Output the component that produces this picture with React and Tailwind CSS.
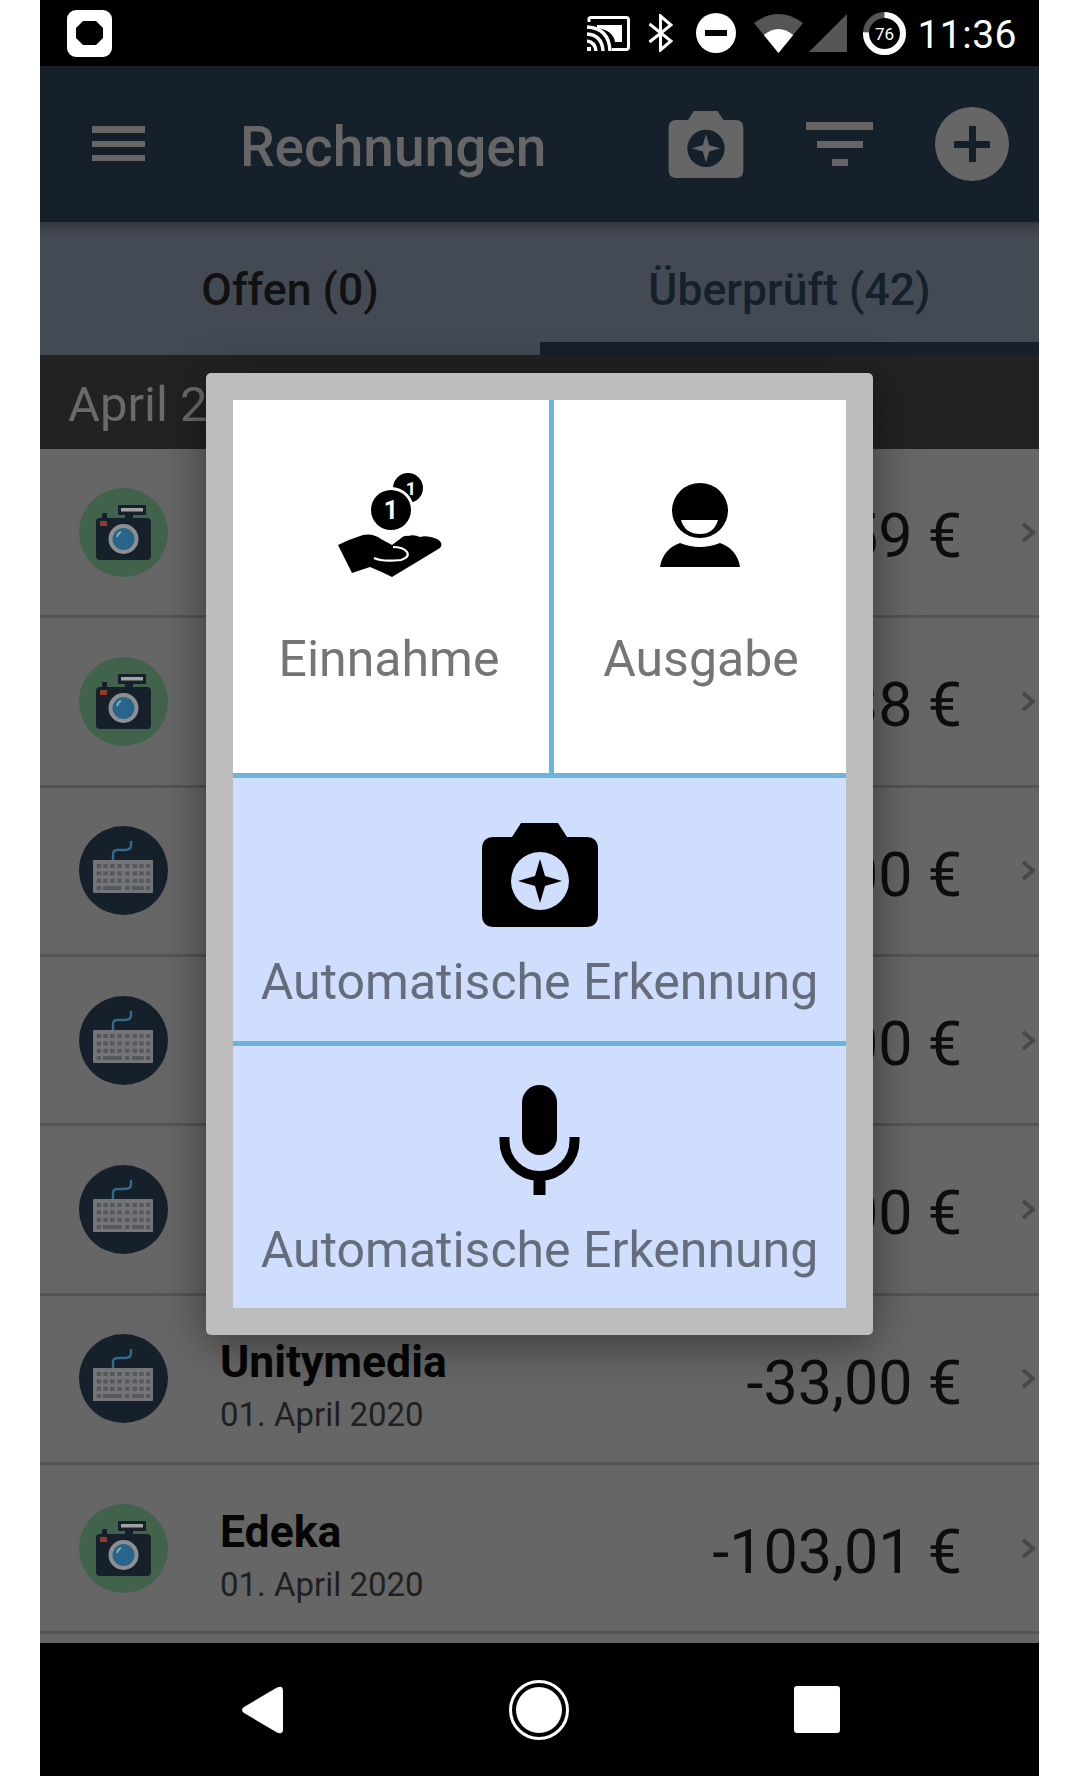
const rows = [
  { icon: 'camera', amount: '-6,59 €' },
  { icon: 'camera', amount: '-3,38 €' },
  { icon: 'keyboard', amount: '-8,00 €' },
  { icon: 'keyboard', amount: '-5,00 €' },
  { icon: 'keyboard', amount: '-9,00 €' },
  { icon: 'keyboard', name: 'Unitymedia', date: '01. April 2020', amount: '-33,00 €' },
  { icon: 'camera', name: 'Edeka', date: '01. April 2020', amount: '-103,01 €' },
]

function CameraStar({ className }) {
  return (
    <svg viewBox="0 0 116 104" className={className}>
      <path
        fillRule="evenodd"
        fill="currentColor"
        d="M30 14 L39 0 H76 L85 14 H104 Q116 14 116 26 V92 Q116 104 104 104 H12 Q0 104 0 92 V26 Q0 14 12 14 Z
           M58 29 A29 29 0 1 0 58 87 A29 29 0 1 0 58 29 Z
           M58 36 L63 53 L80 58 L63 63 L58 80 L53 63 L36 58 L53 53 Z"
      />
    </svg>
  )
}

function CameraAvatar() {
  return (
    <svg viewBox="0 0 89 89" className="w-[89px] h-[89px] shrink-0">
      <circle cx="44.5" cy="44.5" r="44.5" fill="#41634c" />
      <rect x="39" y="17" width="28" height="10" rx="1" fill="#15202b" />
      <rect x="42" y="20" width="22" height="3.5" fill="#a3a3a3" />
      <rect x="46" y="26" width="8" height="5" fill="#15202b" />
      <rect x="23" y="25" width="5" height="6" rx="1" fill="#15202b" />
      <rect x="17" y="30" width="55" height="42" rx="4" fill="#15202b" />
      <rect x="21" y="33" width="7" height="5" fill="#8f3a2b" />
      <circle cx="44.5" cy="51" r="15" fill="#8f8f8f" />
      <circle cx="44.5" cy="51" r="11" fill="#27668a" />
      <path d="M38 49 Q39 45 42 44" stroke="#9fb4bf" strokeWidth="1.5" fill="none" />
    </svg>
  )
}

function KeyboardAvatar() {
  const ys = [38, 45.4, 52.8, 60]
  const xs = [17.7, 24.3, 31, 38.3, 46, 53.7, 60.3, 67]
  return (
    <svg viewBox="0 0 89 89" className="w-[89px] h-[89px] shrink-0">
      <circle cx="44.5" cy="44.5" r="44.5" fill="#15202b" />
      <path d="M34 34 V28 Q34 24 39 24 H46 Q52 24 52 19 V15" stroke="#2f6b8a" strokeWidth="2.4" fill="none" />
      <rect x="14" y="34" width="60" height="33" rx="1" fill="#737578" />
      {ys.map(y => xs.map(x => <rect key={`${x}-${y}`} x={x} y={y} width="4.4" height="4" fill="#55595e" />))}
      <rect x="24" y="60" width="18" height="4" fill="#55595e" />
      <rect x="53" y="60" width="11" height="4" fill="#55595e" />
    </svg>
  )
}

function Row({ icon, name, date, amount }) {
  return (
    <div className="h-[169.33px] shrink-0 border-b-[3px] border-[#545454] flex items-center pl-[39px] pr-[3px]">
      {icon === 'camera' ? <CameraAvatar /> : <KeyboardAvatar />}
      <div className="ml-[52px] mt-[15px]">
        {name && <div className="text-[44.5px] leading-[52px] font-bold text-[#050505]">{name}</div>}
        {date && <div className="text-[33px] leading-[42px] mt-[6px] text-[#1f1f1f]">{date}</div>}
      </div>
      <div className="ml-auto mt-[8px] text-[61px] leading-[70px] text-[#0d0d0d]">{amount}</div>
      <svg viewBox="0 0 15 21" className="w-[15px] h-[21px] ml-[59px]">
        <path d="M2 2 L12 10.5 L2 19" stroke="#484848" strokeWidth="4" fill="none" />
      </svg>
    </div>
  )
}

function StatusBar() {
  return (
    <div className="h-[66px] bg-black flex items-center pl-[27px] pr-[22px] shrink-0">
      <div className="w-[45px] h-[47px] bg-white rounded-[9px] flex items-center justify-center">
        <svg viewBox="0 0 27 24" className="w-[27px] h-[24px]">
          <path d="M7 0 H20 L27 7 V17 L20 24 H7 L0 17 V7 Z" fill="#000" />
        </svg>
      </div>
      <div className="ml-auto flex items-center">
        <svg viewBox="0 0 43 35" className="w-[43px] h-[35px]">
          <path d="M2 6 V3 Q2 1.5 4 1.5 H39 Q41.5 1.5 41.5 4 V31 Q41.5 33.5 39 33.5 H25" stroke="#fff" strokeWidth="3" fill="none" />
          <path d="M0 11 Q22 12 23 35 M0 18 Q15 19 16 35 M0 25 Q8 26 9 35" stroke="#fff" strokeWidth="3.4" fill="none" />
          <path d="M0 31 H4 V35 H0 Z" fill="#fff" />
          <path d="M10 9 H35 V26 H28 Q26 14 10 12 Z" fill="#fff" />
        </svg>
        <svg viewBox="0 0 25 38" className="w-[25px] h-[38px] ml-[18px]">
          <path d="M1.5 10 L23 27 L12.5 36 V2 L23 11 L1.5 28" stroke="#fff" strokeWidth="3" fill="none" />
        </svg>
        <div className="w-[40px] h-[40px] rounded-full bg-white ml-[23px] flex items-center justify-center">
          <div className="w-[22px] h-[6px] bg-black" />
        </div>
        <svg viewBox="0 0 49 39" className="w-[49px] h-[39px] ml-[18px]">
          <path d="M24.5 39 L0 9 Q24.5 -9 49 9 Z" fill="#555" />
          <path d="M24.5 39 L9.8 21 Q24.5 9 39.2 21 Z" fill="#fff" />
        </svg>
        <svg viewBox="0 0 38 38" className="w-[38px] h-[38px] ml-[6px]">
          <path d="M38 0 V38 H0 Z" fill="#555" />
        </svg>
        <svg viewBox="0 0 43 43" className="w-[43px] h-[43px] ml-[16px]">
          <circle cx="21.5" cy="21.5" r="18.5" stroke="#555" strokeWidth="6" fill="none" />
          <circle
            cx="21.5"
            cy="21.5"
            r="18.5"
            stroke="#fff"
            strokeWidth="6"
            fill="none"
            pathLength="100"
            strokeDasharray="76 100"
            transform="rotate(-90 21.5 21.5)"
          />
          <text x="21.5" y="27.5" textAnchor="middle" fill="#fff" fontSize="17" fontFamily="Roboto">76</text>
        </svg>
        <div className="ml-[11px] mt-[4px] text-white text-[39px] leading-[44px] tracking-[0.5px]">11:36</div>
      </div>
    </div>
  )
}

function Header() {
  return (
    <div className="h-[156px] bg-[#15202b] flex items-center pl-[52px] pr-[30px] shrink-0 text-[#666666]">
      <div className="w-[53px] mt-[-2px] flex flex-col gap-[8px]">
        <div className="h-[7px] bg-[#666666]" />
        <div className="h-[6px] bg-[#666666]" />
        <div className="h-[6px] bg-[#666666]" />
      </div>
      <div className="ml-[95px] mt-[5px] text-[55px] leading-[60px] font-medium">Rechnungen</div>
      <CameraStar className="ml-auto w-[76px] h-[67px]" />
      <div className="ml-[62px] w-[67px] flex flex-col items-center gap-[11px]">
        <div className="w-[67px] h-[8px] bg-[#666666]" />
        <div className="w-[46px] h-[7px] bg-[#666666]" />
        <div className="w-[16px] h-[7px] bg-[#666666]" />
      </div>
      <div className="ml-[62px] w-[74px] h-[74px] rounded-full bg-[#666666] flex items-center justify-center relative">
        <div className="w-[36px] h-[7px] bg-[#15202b]" />
        <div className="w-[7px] h-[36px] bg-[#15202b] absolute" />
      </div>
    </div>
  )
}

function Tabs() {
  return (
    <div className="h-[133px] bg-[#434a54] flex shrink-0 relative text-[44.5px] font-medium">
      <div className="absolute inset-x-0 top-0 h-[14px] bg-gradient-to-b from-[#33383f] to-transparent" />
      <div className="w-[500px] flex items-center justify-center pt-[3px] text-[#111111]">Offen (0)</div>
      <div className="flex-1 flex items-center justify-center pt-[16px] border-b-[13px] border-[#15202b] text-[#15202b]">
        Überprüft (42)
      </div>
    </div>
  )
}

function HandIcon() {
  return (
    <svg viewBox="0 0 104 107" className="w-[104px] h-[107px] ml-[-2px]">
      <circle cx="70" cy="18" r="15" fill="#000" />
      <text x="73" y="25" textAnchor="middle" fill="#fff" fontSize="18" fontWeight="700" fontFamily="Roboto">1</text>
      <circle cx="53" cy="40" r="23" fill="#fff" />
      <circle cx="53" cy="40" r="20" fill="#000" />
      <text x="53" y="49" textAnchor="middle" fill="#fff" fontSize="25" fontWeight="700" fontFamily="Roboto">1</text>
      <path
        d="M0 75 Q12 69 25 65 Q35 63 43 69 L54 75 L62 69 Q66 65 70 66 Q76 64 82 67 Q90 65 99 69 Q106 73 102 78 L54 107 Q42 101 32 97 L14 103 Z"
        fill="#000"
      />
      <path d="M36 88 Q44 92 63 90 Q72 87 69 82 Q65 77 55 77" stroke="#fff" strokeWidth="2.2" fill="none" />
    </svg>
  )
}

function PersonIcon() {
  return (
    <svg viewBox="0 0 80 84" className="w-[80px] h-[84px]">
      <ellipse cx="40" cy="27.5" rx="28" ry="27.5" fill="#000" />
      <path d="M21 37 H58 Q54 51 40 51 Q25 51 21 37 Z" fill="#fff" />
      <path d="M0 84 Q3 66 20 60 Q40 68 60 60 Q77 66 80 84 Z" fill="#000" />
    </svg>
  )
}

function MicIcon() {
  return (
    <svg viewBox="0 0 81 110" className="w-[81px] h-[110px]">
      <rect x="23" y="0" width="35" height="70" rx="17.5" fill="#000" />
      <path d="M5.5 52 V56 A35 35 0 0 0 75.5 56 V52" stroke="#000" strokeWidth="10" fill="none" />
      <rect x="34.5" y="88" width="12" height="22" fill="#000" />
    </svg>
  )
}

function Modal() {
  return (
    <div className="absolute left-[166px] top-[373px] w-[667px] h-[962px] p-[27px] bg-[#bdbdbd] rounded-[5px] shadow-[0_8px_45px_rgba(0,0,0,0.45)]">
      <div className="h-full flex flex-col text-[50px] leading-[56px]">
        <div className="h-[373px] bg-white flex shrink-0 text-[#757575]">
          <div className="w-[316px] flex flex-col items-center pt-[70px]">
            <HandIcon />
            <div className="mt-[54px] ml-[-4px]">Einnahme</div>
          </div>
          <div className="w-[5px] bg-[#6cb4e0]" />
          <div className="flex-1 flex flex-col items-center pt-[83px]">
            <PersonIcon />
            <div className="mt-[64px] ml-[2px]">Ausgabe</div>
          </div>
        </div>
        <div className="h-[5px] bg-[#6cb4e0] shrink-0" />
        <div className="h-[263px] bg-[#cfdefd] flex flex-col items-center pt-[45px] shrink-0 text-[#656d7d]">
          <CameraStar className="w-[116px] h-[104px] text-black" />
          <div className="mt-[27px]">Automatische Erkennung</div>
        </div>
        <div className="h-[5px] bg-[#6cb4e0] shrink-0" />
        <div className="flex-1 bg-[#cfdefd] flex flex-col items-center pt-[39px] text-[#656d7d]">
          <MicIcon />
          <div className="mt-[27px]">Automatische Erkennung</div>
        </div>
      </div>
    </div>
  )
}

function NavBar() {
  return (
    <div className="h-[133px] bg-black flex items-center pl-[201px] shrink-0 relative">
      <svg viewBox="0 0 42 48" className="w-[42px] h-[48px]">
        <path d="M3 21 L36 1.5 Q42 -1 42 5 V43 Q42 49 36 46.5 L3 27 Q-1 24 3 21 Z" fill="#fff" />
      </svg>
      <div className="ml-[226px] w-[60px] h-[60px] rounded-full border-[3px] border-white p-[4px]">
        <div className="w-full h-full rounded-full bg-white" />
      </div>
      <div className="ml-[225px] w-[46px] h-[47px] bg-white rounded-[3px]" />
    </div>
  )
}

export default function App() {
  return (
    <div className="w-[1080px] h-[1776px] bg-white font-['Roboto',sans-serif] pl-[40px]">
      <div className="w-[999px] h-full relative overflow-hidden flex flex-col bg-[#666666]">
        <StatusBar />
        <Header />
        <Tabs />
        <div className="h-[94px] bg-[#222222] flex items-center pl-[28px] pt-[6px] text-[49px] text-[#6a6a6a] shrink-0">April 2020</div>
        <div className="flex-1 overflow-hidden">
          {rows.map((r, i) => <Row key={i} {...r} />)}
        </div>
        <Modal />
        <div className="relative z-10">
          <NavBar />
        </div>
      </div>
    </div>
  )
}
